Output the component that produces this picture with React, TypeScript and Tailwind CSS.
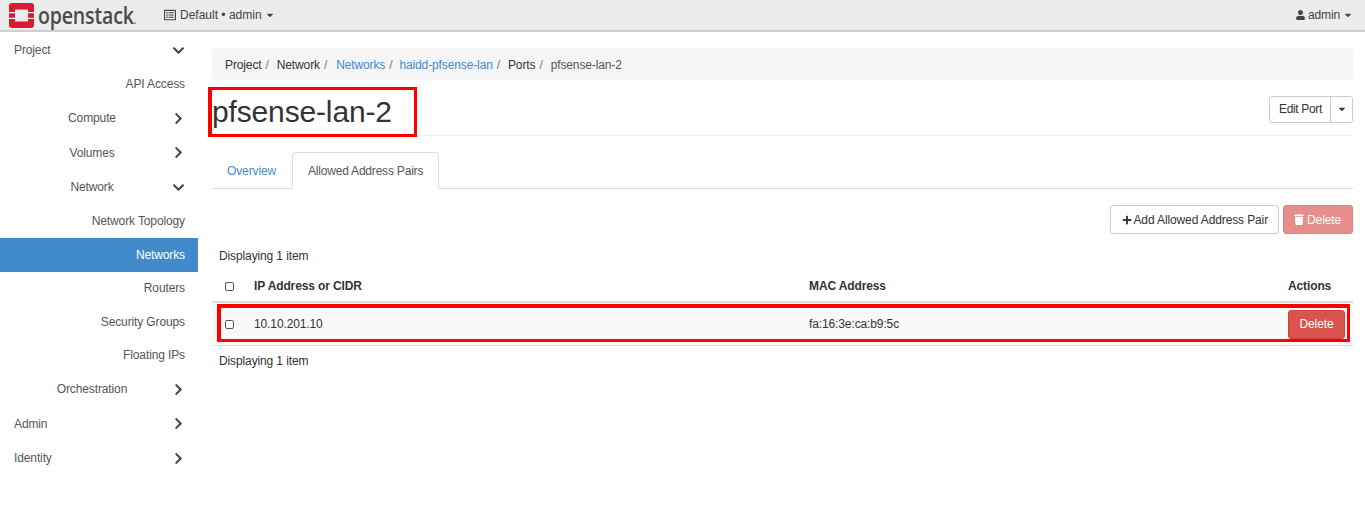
import { FaCaretDown, FaChevronDown, FaChevronRight, FaPlus, FaRegListAlt, FaTrash, FaUser } from 'react-icons/fa';

type NavItem = { label: string; level: 0 | 1 | 2; open?: boolean; chevron?: boolean; active?: boolean };

const NAV: NavItem[] = [
  { label: 'Project', level: 0, chevron: true, open: true },
  { label: 'API Access', level: 2 },
  { label: 'Compute', level: 1, chevron: true },
  { label: 'Volumes', level: 1, chevron: true },
  { label: 'Network', level: 1, chevron: true, open: true },
  { label: 'Network Topology', level: 2 },
  { label: 'Networks', level: 2, active: true },
  { label: 'Routers', level: 2 },
  { label: 'Security Groups', level: 2 },
  { label: 'Floating IPs', level: 2 },
  { label: 'Orchestration', level: 1, chevron: true },
  { label: 'Admin', level: 0, chevron: true },
  { label: 'Identity', level: 0, chevron: true },
];

function SideRow({ item }: { item: NavItem }) {
  if (item.level === 2) {
    return (
      <div
        className={
          item.active
            ? 'h-[33.4px] flex items-center justify-end pr-[13px] bg-[#428bca] text-white'
            : 'h-[33.4px] flex items-center justify-end pr-[13px] text-[#555]'
        }
      >
        {item.label}
      </div>
    );
  }
  return (
    <div className="h-[34.6px] flex items-center justify-between pr-[13px] pl-[14px] text-[#555]">
      <span className={item.level === 1 ? 'w-[156px] text-center' : ''}>{item.label}</span>
      {item.open ? (
        <FaChevronDown className="w-[13px] h-[13px] text-[#444]" />
      ) : (
        <FaChevronRight className="w-[13px] h-[13px] text-[#444]" />
      )}
    </div>
  );
}

function Logo() {
  return (
    <div className="flex items-center w-[141px]">
      <svg width="25" height="25" viewBox="0 0 25 25" className="ml-[9px] shrink-0">
        <path
          fill="#da1a32"
          d="M3 0h19a3 3 0 0 1 3 3v6h-6V6.500H6V9H0V3a3 3 0 0 1 3-3zM0 10.200h6v4.600H0zM19 10.200h6v4.600h-6zM0 16h6v2.500h13V16h6v6a3 3 0 0 1-3 3H3a3 3 0 0 1-3-3z"
        />
      </svg>
      <span className="ml-[4px] inline-block origin-left scale-x-[0.85] text-[23px] leading-none font-semibold text-[#4d4a48] font-['Open_Sans',sans-serif] tracking-[-0.2px]">
        openstack<span className="text-[10px]">.</span>
      </span>
    </div>
  );
}

export default function App() {
  return (
    <div className="min-h-[507px] bg-white text-[12px] tracking-[-0.12px] text-[#333] font-['Liberation_Sans',Arial,sans-serif]">
      <header className="h-[32px] bg-[#ececec] border-b-2 border-[#d0d0d0] flex items-center justify-between">
        <div className="flex items-center">
          <Logo />
          <div className="ml-[23px] flex items-center text-[#444]">
            <FaRegListAlt className="w-[12px] h-[12px] mr-[4px]" />
            <span className="tracking-normal">Default • admin</span>
            <FaCaretDown className="w-[10px] h-[10px] ml-[3px]" />
          </div>
        </div>
        <div className="flex items-center pr-[12px] text-[#444]">
          <FaUser className="w-[9px] h-[10px] mr-[3px]" />
          <span>admin</span>
          <FaCaretDown className="w-[10px] h-[10px] ml-[3px]" />
        </div>
      </header>

      <div className="flex">
        <aside className="w-[198px] shrink-0 pt-[1px]">
          {NAV.map((item) => (
            <SideRow key={item.label} item={item} />
          ))}
        </aside>

        <main className="flex-1 pl-[14px] pr-[12px] pt-[16px]">
          <nav className="h-[32px] bg-[#f5f5f5] rounded-[4px] flex items-center px-[13px] pt-[1px]">
            <span>Project</span>
            <span className="text-[#777] pl-[4px] pr-[8px]">/</span>
            <span>Network</span>
            <span className="text-[#777] pl-[4px] pr-[9px]">/</span>
            <span className="text-[#428bca]">Networks</span>
            <span className="text-[#777] pl-[4px] pr-[7px]">/</span>
            <span className="text-[#428bca]">haidd-pfsense-lan</span>
            <span className="text-[#777] pl-[4px] pr-[8px]">/</span>
            <span>Ports</span>
            <span className="text-[#777] pl-[4px] pr-[8px]">/</span>
            <span className="text-[#555]">pfsense-lan-2</span>
          </nav>

          <div className="relative h-[56px] border-b border-[#eee] flex items-center justify-between">
            <h1 className="text-[30px] tracking-[-0.15px] leading-none font-normal pt-[8px]">pfsense-lan-2</h1>
            <div className="flex mt-[3px]">
              <button className="h-[27px] w-[62px] border border-[#ccc] rounded-l-[3px] bg-white tracking-[-0.35px] pl-[1px]">Edit Port</button>
              <button className="h-[27px] w-[23px] -ml-px border border-[#ccc] rounded-r-[3px] bg-white flex items-center justify-center">
                <FaCaretDown className="w-[10px] h-[10px]" />
              </button>
            </div>
            <div className="absolute left-[-4px] top-[7px] w-[209px] h-[50px] border-[3px] border-l-4 border-[#f00]" />
          </div>

          <div className="mt-[16px] h-[37px] border-b border-[#ddd] flex">
            <div className="h-[37px] w-[80px] pl-[15px] flex items-center text-[#428bca]">Overview</div>
            <div className="h-[37px] px-[15px] flex items-center text-[#555] bg-white border border-[#ddd] border-b-white rounded-t-[4px] tracking-[-0.2px]">
              Allowed Address Pairs
            </div>
          </div>

          <div className="mt-[16px] flex justify-end gap-[4px]">
            <button className="h-[29px] pl-[11px] pr-[10px] border border-[#ccc] rounded-[3px] bg-white flex items-center">
              <FaPlus className="w-[10px] h-[10px] mr-[1px]" />
              Add Allowed Address Pair
            </button>
            <button className="h-[29px] pl-[10px] pr-[11px] border border-[#d43f3a] rounded-[3px] bg-[#d9534f] text-white opacity-65 flex items-center">
              <FaTrash className="w-[10px] h-[11px] mr-[3px]" />
              Delete
            </button>
          </div>

          <div className="mt-[15px] pl-[7px] h-[15px] leading-[15px]">Displaying 1 item</div>

          <div className="relative mt-[8px]">
            <div className="h-[31px] pb-[1px] flex items-center font-bold border-b-2 border-[#ddd]">
              <div className="w-[42px] pl-[13px] flex items-center">
                <span className="w-[9px] h-[9px] border border-[#555] rounded-[2px] bg-white" />
              </div>
              <div className="w-[555px]">IP Address or CIDR</div>
              <div className="flex-1">MAC Address</div>
              <div className="w-[65px]">Actions</div>
            </div>
            <div className="h-[43px] flex items-center bg-[#f9f9f9] border-b border-[#ddd]">
              <div className="w-[42px] pl-[13px] flex items-center">
                <span className="w-[9px] h-[9px] border border-[#555] rounded-[2px] bg-white" />
              </div>
              <div className="w-[555px]">10.10.201.10</div>
              <div className="flex-1">fa:16:3e:ca:b9:5c</div>
              <div className="w-[65px] pr-[8px] flex justify-end">
                <button className="h-[29px] w-[57px] border border-[#d43f3a] rounded-[3px] bg-[#d9534f] text-white">
                  Delete
                </button>
              </div>
            </div>
            <div className="absolute left-[5px] top-[32px] right-[3px] h-[38px] border-[3px] border-t-4 border-l-4 border-[#f00]" />
          </div>

          <div className="mt-[8px] pl-[7px] h-[15px] leading-[15px]">Displaying 1 item</div>
        </main>
      </div>
    </div>
  );
}
